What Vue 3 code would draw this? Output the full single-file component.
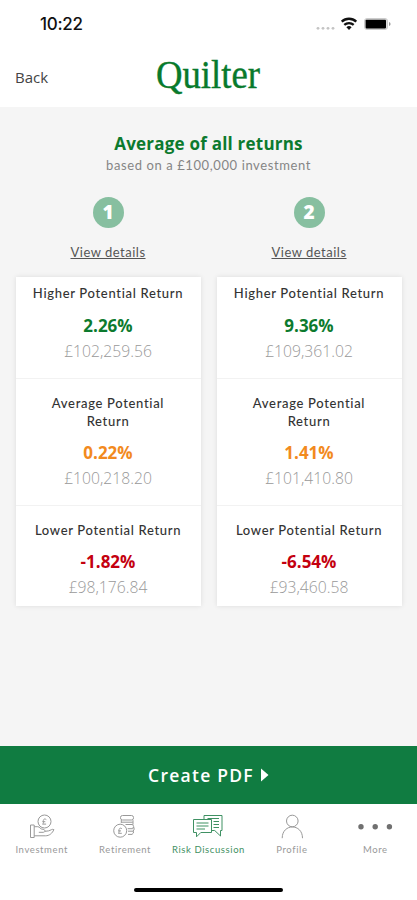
<template>
  <div class="screen">
    <header class="header">
      <div class="status-bar">
        <span class="time">10:22</span>
        <svg class="status-icons" width="76" height="16" viewBox="0 0 76 16">
          <g fill="#c4c4c4">
            <circle cx="3" cy="12.3" r="1.4" />
            <circle cx="8" cy="12.3" r="1.4" />
            <circle cx="13" cy="12.3" r="1.4" />
            <circle cx="18" cy="12.3" r="1.4" />
          </g>
          <g fill="none" stroke="#111" stroke-width="2.3">
            <path d="M26.7 5.6a10.8 10.8 0 0 1 14.6 0" />
            <path d="M29.3 8.9a7 7 0 0 1 9.4 0" />
          </g>
          <path d="M31.4 11.2a4 4 0 0 1 5.2 0L34 13.9z" fill="#111" />
          <rect x="49.5" y="2.5" width="23" height="11" rx="2.5" fill="#ddd" stroke="#ccc" />
          <rect x="50.6" y="3.8" width="20.4" height="8.6" rx="0.8" fill="#000" />
          <path d="M74 6v4q1.6-.6 1.6-2T74 6z" fill="#999" />
        </svg>
      </div>
      <div class="nav-bar">
        <span class="back">Back</span>
        <svg class="logo" width="108" height="52" viewBox="0 0 108 52">
          <text x="1" y="37.5" textLength="104" lengthAdjust="spacingAndGlyphs">Quilter</text>
        </svg>
        <span></span>
      </div>
    </header>

    <main class="content">
      <h1 class="title">Average of all returns</h1>
      <p class="subtitle">based on a £100,000 investment</p>

      <div class="columns">
        <section v-for="col in columns" :key="col.id" class="column">
          <div class="badge">{{ col.id }}</div>
          <a class="details">View details</a>
          <div class="card">
            <div v-for="row in col.rows" :key="row.type" :class="['row', row.type]">
              <div class="label">{{ row.label }}</div>
              <div class="percent">{{ row.percent }}</div>
              <div class="amount">{{ row.amount }}</div>
            </div>
          </div>
        </section>
      </div>
    </main>

    <button class="create">
      <span>Create PDF</span>
      <svg width="8" height="14" viewBox="0 0 8 14"><path d="M0 0.5L7.5 7L0 13.5z" fill="#fff" /></svg>
    </button>

    <nav class="tabs">
      <div v-for="tab in tabs" :key="tab.name" :class="['tab', { active: tab.active }]">
        <svg width="36" height="26" viewBox="0 0 36 26" fill="none" stroke="currentColor" stroke-width="1">
          <g v-if="tab.icon === 'investment'">
            <circle cx="20.5" cy="7.5" r="6.5" />
            <path d="M22.3 5.6c-2-1.5-3.3 0-2.9 1.8.3 1.2 0 2.2-.8 2.7h3.5M18.3 7.7h3" />
            <path d="M6.5 11h3.7v12.5H6.5zM10.2 12.7h3.6c2.2 0 2.2 2.6 5.1 2.6 2.5 0 2.8 3 .4 3h-4.5M21 17.3l3.5-.4c2.2-.5 3.5-2.2 5.4-1.3-1.7 3.8-4.5 6.2-8.5 6.2H10.2" />
          </g>
          <g v-else-if="tab.icon === 'retirement'">
            <rect x="13.5" y="1.5" width="13" height="4.5" rx="2" />
            <path d="M14.3 6v3M26 6.2v4.3M14.5 8.2h11.3M18.5 10.5h7.2q1.8 1.8 0 4.2h-5M26.7 13q1.3 2.2-.6 4.2H21M26.4 17.2q.8 2-1.4 3.2h-4" />
            <circle cx="13.2" cy="16.7" r="6.5" />
            <path d="M15 14.8c-2-1.5-3.3 0-2.9 1.8.3 1.2 0 2.2-.8 2.7h3.5M11 16.9h3" />
          </g>
          <g v-else-if="tab.icon === 'discussion'">
            <path d="M14 5V1.5h18v15h-1.5V22l-5.8-5.5h-3.2" />
            <path d="M17.5 4.5H29M23.5 7.5H29M23.5 10.5H29M23.5 13.5H29" />
            <path d="M3.5 5.5h18v13H10.8L6.5 22.8v-4.3h-3zM6.5 9h12M6.5 12h12M6.5 15h8.5" />
          </g>
          <g v-else-if="tab.icon === 'profile'">
            <circle cx="18.3" cy="7" r="5.8" />
            <path d="M8.2 24.2c0-15 20.3-15 20.3 0" />
          </g>
          <g v-else fill="#707070" stroke="none">
            <circle cx="4" cy="12.8" r="2.7" />
            <circle cx="18.2" cy="12.8" r="2.7" />
            <circle cx="32.4" cy="12.8" r="2.7" />
          </g>
        </svg>
        <span class="tab-name">{{ tab.name }}</span>
      </div>
    </nav>
    <div class="home-indicator"></div>
  </div>
</template>

<script setup>
const columns = [
  {
    id: 1,
    rows: [
      { type: 'higher', label: 'Higher Potential Return', percent: '2.26%', amount: '£102,259.56' },
      { type: 'average', label: 'Average Potential Return', percent: '0.22%', amount: '£100,218.20' },
      { type: 'lower', label: 'Lower Potential Return', percent: '-1.82%', amount: '£98,176.84' }
    ]
  },
  {
    id: 2,
    rows: [
      { type: 'higher', label: 'Higher Potential Return', percent: '9.36%', amount: '£109,361.02' },
      { type: 'average', label: 'Average Potential Return', percent: '1.41%', amount: '£101,410.80' },
      { type: 'lower', label: 'Lower Potential Return', percent: '-6.54%', amount: '£93,460.58' }
    ]
  }
]

const tabs = [
  { name: 'Investment', icon: 'investment' },
  { name: 'Retirement', icon: 'retirement' },
  { name: 'Risk Discussion', icon: 'discussion', active: true },
  { name: 'Profile', icon: 'profile' },
  { name: 'More', icon: 'more' }
]
</script>

<style>
body {
  margin: 0;
}
</style>

<style scoped>
.screen {
  width: 417px;
  height: 900px;
  display: flex;
  flex-direction: column;
  background: #fff;
  font-family: "Open Sans", sans-serif;
  overflow: hidden;
}

.header {
  height: 107px;
  flex: none;
}

.status-bar {
  height: 48px;
  box-sizing: border-box;
  padding: 0 26px 0 40px;
  display: flex;
  align-items: center;
  justify-content: space-between;
}

.time {
  font-family: Inter, sans-serif;
  font-size: 17px;
  font-weight: 500;
  line-height: 20px;
  letter-spacing: -0.3px;
  color: #111;
}

.nav-bar {
  height: 59px;
  padding: 0 15px;
  display: grid;
  grid-template-columns: 1fr 108px 1fr;
  align-items: center;
}

.back {
  margin-top: -2px;
  font-size: 15px;
  line-height: 20px;
  color: #444;
}

.logo {
  margin-top: -4px;
}

.logo text {
  font-family: "Liberation Serif", serif;
  font-size: 41px;
  fill: #087a2c;
  stroke: #087a2c;
  stroke-width: 0.4;
}

.content {
  flex: 1;
  padding: 25px 15.5px 0;
  background: #f5f5f5;
}

.title {
  margin: 0;
  text-align: center;
  font-size: 17px;
  line-height: 24px;
  font-weight: 700;
  letter-spacing: 0.22px;
  color: #0c7a2e;
}

.subtitle {
  margin: 0;
  text-align: center;
  font-family: Lato, sans-serif;
  font-size: 13px;
  line-height: 18px;
  letter-spacing: 0.6px;
  color: #858585;
}

.columns {
  margin-top: 23px;
  display: grid;
  grid-template-columns: 1fr 1fr;
  gap: 16px;
}

.column {
  display: flex;
  flex-direction: column;
  align-items: center;
}

.badge {
  width: 31px;
  height: 31px;
  border-radius: 50%;
  background: #87bfa0;
  color: #fff;
  font-size: 19px;
  font-weight: 800;
  line-height: 31px;
  text-align: center;
}

.details {
  margin-top: 14px;
  font-family: Lato, sans-serif;
  font-size: 13px;
  line-height: 20px;
  letter-spacing: 0.5px;
  color: #555;
  text-decoration: underline;
}

.card {
  width: 100%;
  margin-top: 15px;
  background: #fff;
  box-shadow: 0 0 5px rgba(0, 0, 0, 0.1);
}

.row {
  box-sizing: border-box;
  height: 127px;
  padding: 15px 16px 0;
  text-align: center;
}

.row + .row {
  border-top: 1px solid #f2f2f2;
}

.row.higher {
  height: 101px;
  padding-top: 7px;
}

.row.lower {
  height: 101px;
}

.label {
  font-family: Lato, sans-serif;
  font-size: 13px;
  font-weight: 500;
  line-height: 18px;
  letter-spacing: 0.68px;
  color: #333;
}

.percent {
  margin-top: 10px;
  font-size: 17px;
  font-weight: 700;
  line-height: 26px;
}

.higher .percent {
  margin-top: 11px;
  color: #0c7a2e;
}

.average .percent {
  color: #f28a1e;
}

.lower .percent {
  color: #c4000f;
}

.amount {
  font-size: 15.7px;
  font-weight: 300;
  line-height: 24px;
  color: #999;
}

.create {
  height: 58px;
  flex: none;
  border: none;
  padding: 0;
  display: flex;
  align-items: center;
  justify-content: center;
  gap: 7px;
  background: #107c41;
  color: #fff;
  font-family: "Open Sans", sans-serif;
  font-size: 17.5px;
  font-weight: 600;
  letter-spacing: 1.25px;
}

.tabs {
  height: 74px;
  flex: none;
  display: grid;
  grid-template-columns: repeat(5, 1fr);
  padding-top: 10px;
}

.tab {
  display: flex;
  flex-direction: column;
  align-items: center;
  color: #999;
}

.tab.active {
  color: #3f9163;
}

.tab-name {
  margin-top: 4px;
  font-family: Lato, sans-serif;
  font-size: 9.5px;
  line-height: 12px;
  letter-spacing: 0.6px;
  white-space: nowrap;
}

.home-indicator {
  width: 149px;
  height: 4px;
  margin: 0 auto 8px;
  flex: none;
  border-radius: 2px;
  background: #000;
}
</style>
